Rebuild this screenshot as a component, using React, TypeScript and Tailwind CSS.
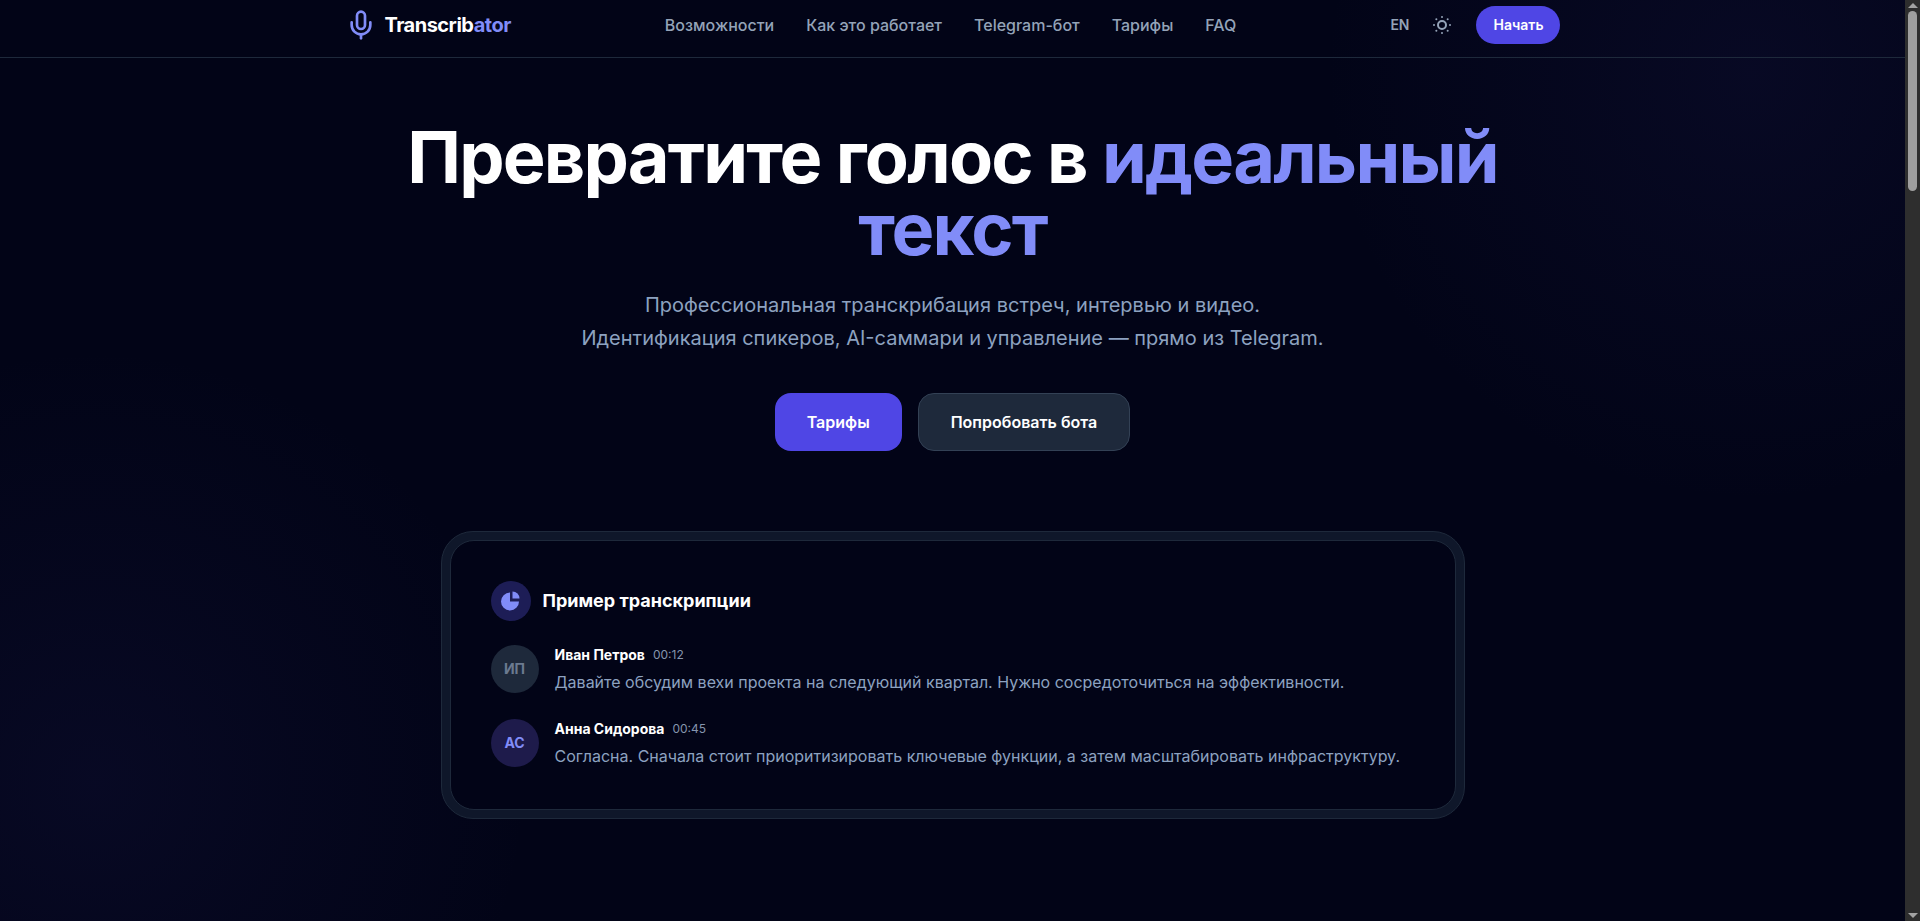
import { Mic, SunDim } from "lucide-react"

const navLinks = ["Возможности", "Как это работает", "Telegram-бот", "Тарифы", "FAQ"]

function Message({ initials, name, time, text, avatar }: { initials: string; name: string; time: string; text: string; avatar: string }) {
  return (
    <div className="flex items-start gap-4">
      <div className={`flex h-12 w-12 shrink-0 items-center justify-center rounded-full text-sm font-bold ${avatar}`}>{initials}</div>
      <div className="pb-px">
        <div className="flex items-center gap-2">
          <span className="text-sm font-bold text-white">{name}</span>
          <span className="text-xs text-[#8595ad]">{time}</span>
        </div>
        <p className="mt-[5px] text-base text-[#8da2c0]">{text}</p>
      </div>
    </div>
  )
}

export default function App() {
  return (
    <div className="flex h-screen overflow-hidden bg-[#020417] font-['Inter',sans-serif]">
      <div className="relative flex-1 overflow-hidden">
        <div className="absolute inset-0 bg-[radial-gradient(circle_at_92%_8%,rgba(49,46,129,0.12),transparent_22%),radial-gradient(circle_at_5%_85%,rgba(49,46,129,0.12),transparent_22%)]"></div>
        <div className="relative">
          <header className="h-[58px] border-b border-[#1e293b]">
            <div className="mx-auto flex h-[50px] max-w-7xl items-center justify-between px-8">
              <div className="flex items-center gap-2">
                <Mic className="h-8 w-8 text-[#818cf8]" strokeWidth={2} />
                <span className="text-xl font-bold tracking-tight text-white">
                  Transcrib<span className="text-[#818cf8]">ator</span>
                </span>
              </div>
              <nav className="flex items-center gap-8">
                {navLinks.map((link) => (
                  <a key={link} className="text-base font-medium text-[#94a3b8]">
                    {link}
                  </a>
                ))}
              </nav>
              <div className="flex items-center">
                <span className="text-sm font-semibold text-[#94a3b8]">EN</span>
                <SunDim className="ml-[21px] h-6 w-6 text-[#94a3b8]" />
                <button className="ml-[22px] h-[38px] w-[84px] rounded-full bg-[#4f46e5] text-sm font-semibold text-white">Начать</button>
              </div>
            </div>
          </header>

          <main className="flex flex-col items-center">
            <h1 className="mt-[63px] max-w-[1152px] text-center text-7xl font-bold leading-[72px] tracking-tight text-white">
              Превратите голос в <span className="text-[#818cf8]">идеальный текст</span>
            </h1>
            <p className="mt-6 text-center text-xl leading-[33px] text-[#8da2c0]">
              Профессиональная транскрибация встреч, интервью и видео.
              <br />
              Идентификация спикеров, AI-саммари и управление — прямо из Telegram.
            </p>
            <div className="mt-[38px] flex gap-4">
              <button className="h-[58px] rounded-2xl bg-[#4f46e5] px-8 text-base font-semibold text-white">Тарифы</button>
              <button className="h-[58px] rounded-2xl border border-[#334155] bg-[#1e293b] px-8 text-base font-semibold text-white">Попробовать бота</button>
            </div>

            <div className="mt-20 w-[1024px] rounded-[32px] border border-[#1e293b] bg-[#0f172a] p-2">
              <div className="rounded-3xl border border-[#1e293b] bg-[#020417] p-10">
                <div className="flex items-center gap-3">
                  <div className="flex h-10 w-10 items-center justify-center rounded-full bg-[#312e81]/60">
                    <svg viewBox="0 0 19 20" className="h-5 w-[19px] fill-[#818cf8]">
                      <path d="M9 1.5V10.5H18A9 9 0 1 1 9 1.5Z" />
                      <path d="M11.5 0.5A7 7 0 0 1 18.5 7.5H11.5Z" />
                    </svg>
                  </div>
                  <h2 className="text-lg font-bold text-white">Пример транскрипции</h2>
                </div>
                <div className="mt-6 flex flex-col gap-6">
                  <Message
                    initials="ИП"
                    name="Иван Петров"
                    time="00:12"
                    avatar="bg-[#1e293b] text-[#6b7a90]"
                    text="Давайте обсудим вехи проекта на следующий квартал. Нужно сосредоточиться на эффективности."
                  />
                  <Message
                    initials="АС"
                    name="Анна Сидорова"
                    time="00:45"
                    avatar="bg-[#1e1b4b] text-[#818cf8]"
                    text="Согласна. Сначала стоит приоритизировать ключевые функции, а затем масштабировать инфраструктуру."
                  />
                </div>
              </div>
            </div>
          </main>
        </div>
      </div>

      <aside className="flex w-[15px] shrink-0 flex-col items-center bg-[#2e2e2e]">
        <div className="mt-[3px] h-0 w-0 border-x-[5px] border-b-[5px] border-x-transparent border-b-[#a3a3a3]"></div>
        <div className="mt-[3px] h-[180px] w-[9px] rounded-full bg-[#9f9f9f]"></div>
        <div className="mt-auto mb-[3px] h-0 w-0 border-x-[5px] border-t-[5px] border-x-transparent border-t-[#a3a3a3]"></div>
      </aside>
    </div>
  )
}
